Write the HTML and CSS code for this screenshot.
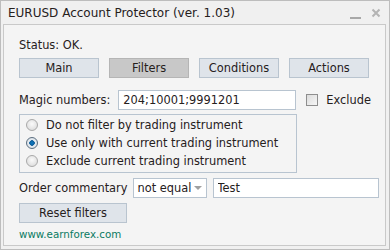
FILE: index.html
```html
<!DOCTYPE html>
<html lang="en">
<head>
  <meta charset="UTF-8" />
  <title>EURUSD Account Protector</title>
  <link rel="stylesheet" href="styles.css">
</head>
<body>
  <div class="window">
    <div class="titlebar">
      <span class="title">EURUSD Account Protector (ver. 1.03)</span>
      <div class="controls">
        <svg class="minimize" width="12" height="10" viewBox="0 0 12 10"><rect x="0" y="7" width="11" height="2" fill="#a8a8a8"/></svg>
        <svg class="close" width="10" height="10" viewBox="0 0 10 10"><path d="M1.5 1.5 L8.5 8.5 M8.5 1.5 L1.5 8.5" stroke="#b4b4b4" stroke-width="2"/></svg>
      </div>
    </div>

    <div class="panel">
      <div class="status">Status: OK.</div>

      <div class="tabs">
        <button class="btn">Main</button>
        <button class="btn active">Filters</button>
        <button class="btn">Conditions</button>
        <button class="btn">Actions</button>
      </div>

      <div class="row magic">
        <label for="magic">Magic numbers:</label>
        <input type="text" id="magic" class="field magic-field" value="204;10001;9991201" />
        <label class="check"><input type="checkbox" /> Exclude</label>
      </div>

      <div class="radio-box">
        <label class="radio"><input type="radio" name="instr" /> Do not filter by trading instrument</label>
        <label class="radio"><input type="radio" name="instr" checked /> Use only with current trading instrument</label>
        <label class="radio"><input type="radio" name="instr" /> Exclude current trading instrument</label>
      </div>

      <div class="row order">
        <label>Order commentary</label>
        <div class="select">not equal <span class="arrow"></span></div>
        <input type="text" class="field comment-field" value="Test" />
      </div>

      <button class="btn reset">Reset filters</button>

      <div class="link">www.earnforex.com</div>
    </div>
  </div>
</body>
</html>
```

FILE: styles.css
```css
:root {
  --text: #26201c;
  --panel-bg: #f4f4f4;
  --field-border: #b8c4d0;
  --btn-bg: #dfe4ea;
  --btn-border: #b9c4cf;
}

* {
  box-sizing: border-box;
  font-family: 'DejaVu Sans', sans-serif;
}

body {
  margin: 0;
  background: #fff;
}

.window {
  width: 390px;
  height: 250px;
  border: 1px solid #bdbdbd;
  background: #f0f0f0;
  display: flex;
  flex-direction: column;
  padding: 0 3px 3px 2px;
}

.titlebar {
  height: 23px;
  display: flex;
  align-items: center;
  justify-content: space-between;
  padding-left: 5px;
  font-size: 12px;
  color: var(--text);
}

.controls {
  display: flex;
  align-items: center;
  gap: 9px;
  padding-right: 5px;
}

.controls .minimize {
  margin-top: 4px;
}

.panel {
  flex: 1;
  border: 1px solid #c9c9c9;
  background: var(--panel-bg);
  padding: 12px 15px 0 15px;
  font-size: 11.4px;
  color: var(--text);
  white-space: nowrap;
}

.status {
  line-height: 16px;
}

.tabs {
  display: flex;
  gap: 10px;
  margin-top: 5px;
}

.btn {
  width: 80px;
  height: 20px;
  padding: 0;
  background: var(--btn-bg);
  border: 1px solid var(--btn-border);
  color: var(--text);
  font-size: 11.4px;
  cursor: pointer;
}

.btn.active {
  background: #c8c8c8;
  border-color: #b5b5b5;
}

.row {
  display: flex;
  align-items: center;
}

.row > * {
  flex-shrink: 0;
}

.magic {
  margin-top: 12px;
  height: 20px;
}

.field {
  height: 20px;
  border: 1px solid var(--field-border);
  background: #fff;
  color: var(--text);
  font-size: 11.4px;
  padding: 0 4px;
  outline: none;
}

.magic-field {
  width: 178px;
  margin-left: 8px;
}

.check {
  display: flex;
  align-items: center;
  margin-left: 10px;
  gap: 8px;
}

.check input {
  appearance: none;
  width: 12px;
  height: 12px;
  margin: 0;
  border: 1px solid #8e8e8e;
  background: linear-gradient(135deg, #dcdcdc, #f6f6f6);
}

.radio-box {
  width: 278px;
  margin-top: 4px;
  border: 1px solid var(--field-border);
  padding: 1px 0 2px 3px;
}

.radio {
  display: flex;
  align-items: center;
  height: 18px;
  gap: 8px;
}

.radio input {
  appearance: none;
  width: 12px;
  height: 12px;
  margin: 0 0 0 3px;
  border-radius: 50%;
  border: 1px solid #a9a9a9;
  background: radial-gradient(circle at 50% 40%, #fafafa, #d6d6d6);
}

.radio input:checked {
  border-color: #5d6f80;
  background: radial-gradient(circle, #0a7bc4 0, #0f5e9a 2.5px, #e9eef3 3px, #d3dbe2 6px);
}

.order {
  margin-top: 5px;
  height: 20px;
}

.select {
  width: 74px;
  height: 20px;
  margin-left: 5px;
  border: 1px solid var(--field-border);
  background: #fff;
  display: flex;
  align-items: center;
  justify-content: space-between;
  padding: 0 4px;
}

.arrow {
  width: 0;
  height: 0;
  border-left: 4px solid transparent;
  border-right: 4px solid transparent;
  border-top: 4px solid #a0a0a0;
}

.comment-field {
  width: 166px;
  margin-left: 6px;
}

.reset {
  width: 108px;
  margin-top: 5px;
}

.link {
  margin-top: 5px;
  font-size: 10.3px;
  color: #0a7a62;
}
```
